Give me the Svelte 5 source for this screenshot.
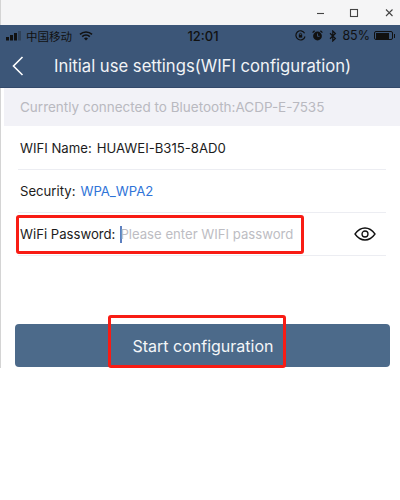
<script lang="ts">
  let password = $state("");
</script>

<div class="window">
  <div class="titlebar">
    <svg class="win" viewBox="0 0 76 14" width="76" height="14" fill="none" stroke="#444" stroke-width="1.1">
      <path d="M0 7.500h7" />
      <rect x="33.500" y="3.500" width="7" height="7" />
      <path d="M69 3.500l6.500 6.500M75.500 3.500l-6.500 6.500" />
    </svg>
  </div>

  <header class="header">
    <div class="status">
      <div class="status_left">
        <svg viewBox="0 0 16 10" width="16" height="10" fill="#111">
          <rect x="0" y="6" width="3" height="3.500" />
          <rect x="4" y="4" width="3" height="5.500" />
          <rect x="8" y="2" width="3" height="7.500" />
          <rect x="12" y="0" width="3" height="9.500" fill="#2f4158" />
        </svg>
        <span class="carrier">中国移动</span>
        <svg viewBox="0 0 14 10" width="14" height="10" fill="none" stroke="#111" stroke-width="1.6">
          <path d="M1 3.400a8.600 8.600 0 0 1 12 0" />
          <path d="M3.200 5.600a5.400 5.400 0 0 1 7.600 0" />
          <path d="M7 9.600l-2-2a2.800 2.800 0 0 1 4 0z" fill="#111" stroke="none" />
        </svg>
      </div>
      <span class="time">12:01</span>
      <div class="status_right">
        <svg viewBox="0 0 11 11" width="11" height="11" fill="none" stroke="#111" stroke-width="1.2">
          <path d="M9.600 3.200A4.600 4.600 0 1 0 10 6.500" />
          <rect x="3.800" y="4.800" width="3.400" height="2.800" fill="#111" stroke="none" />
          <circle cx="5.500" cy="4.400" r="1.100" stroke-width="0.8" />
        </svg>
        <svg viewBox="0 0 11 11" width="11" height="11" fill="#111">
          <circle cx="5.500" cy="6" r="4.400" />
          <path d="M0.600 2.600L2.600 0.700M10.400 2.600L8.400 0.700" stroke="#111" stroke-width="1.300" />
          <path d="M5.500 3.500V6.300H7.600" stroke="#3c5678" stroke-width="0.9" fill="none" />
        </svg>
        <svg viewBox="0 0 8 12" width="8" height="12" fill="none" stroke="#111" stroke-width="1.2">
          <path d="M1 3.200l5.400 5.300L3.800 11V1l2.600 2.500L1 8.800" />
        </svg>
        <span class="pct">85%</span>
        <span class="battery"><span class="level" style="width: 85%"></span></span>
      </div>
    </div>
    <div class="nav">
      <svg class="back" viewBox="0 0 12 20" width="12" height="20" fill="none" stroke="#fff" stroke-width="1.6">
        <path d="M10.500 1L1.500 10l9 9" />
      </svg>
      <h1>Initial use settings(WIFI configuration)</h1>
    </div>
  </header>

  <div class="connected">Currently connected to Bluetooth:ACDP-E-7535</div>

  <div class="form">
    <div class="row">
      <span class="label">WIFI Name:</span>
      <span>HUAWEI-B315-8AD0</span>
    </div>
    <div class="row">
      <span class="label">Security:</span>
      <span class="link">WPA_WPA2</span>
    </div>
    <div class="row">
      <span class="label">WiFi Password:</span>
      <span class="caret"></span>
      <input bind:value={password} placeholder="Please enter WIFI password" />
      <svg class="eye" viewBox="0 0 22 14" width="22" height="14" fill="none" stroke="#111" stroke-width="1.300">
        <path d="M1 7C4 2.800 7.400 1 11 1s7 1.800 10 6c-3 4.200-6.400 6-10 6S4 11.200 1 7z" />
        <circle cx="11" cy="7" r="3" />
      </svg>
      <div class="mark mark_password"></div>
    </div>
  </div>

  <div class="action">
    <button>Start configuration</button>
    <div class="mark mark_button"></div>
  </div>
</div>

<style>
  :global(body) {
    background: #fff;
  }
  .window {
    box-sizing: border-box;
    height: 368px;
    border-left: 1px solid #d4d4d4;
    font-family: Inter, "Liberation Sans", "Noto Sans CJK SC", sans-serif;
    color: #1c1c1c;
    position: relative;
  }
  .titlebar {
    height: 25px;
    background: #f5f5f6;
    display: flex;
    justify-content: flex-end;
    align-items: center;
    padding-right: 7px;
  }
  .win {
    display: block;
  }
  .header {
    height: 63px;
    background: #3c5678;
    box-sizing: border-box;
    margin-left: -1px;
    border-bottom: 1px solid #33496a;
  }
  .status {
    height: 20px;
    padding: 1px 6px 0;
    box-sizing: border-box;
    display: grid;
    grid-template-columns: 1fr auto 1fr;
    align-items: center;
    font-size: 11px;
    color: #111;
  }
  .status_left {
    display: flex;
    align-items: center;
    gap: 4px;
  }
  .carrier {
    margin-right: 3px;
    font-size: 11.500px;
  }
  .time {
    font-size: 13px;
    font-weight: 500;
    margin-left: 6px;
  }
  .status_right {
    display: flex;
    align-items: center;
    justify-content: flex-end;
    gap: 6px;
  }
  .pct {
    font-size: 12.500px;
    margin-left: -1px;
  }
  .battery {
    position: relative;
    box-sizing: border-box;
    display: block;
    width: 19px;
    height: 9px;
    border: 1px solid #111;
    border-radius: 2px;
    padding: 0.5px;
    margin-left: -2px;
    margin-right: 1px;
  }
  .battery::after {
    content: "";
    position: absolute;
    right: -3px;
    top: 1.500px;
    width: 1.500px;
    height: 4px;
    background: #111;
  }
  .level {
    display: block;
    height: 100%;
    background: #111;
  }
  .nav {
    display: flex;
    align-items: center;
    height: 42px;
    padding-left: 12px;
    color: #fff;
  }
  .back {
    flex: none;
  }
  h1 {
    margin: 0 0 0 30px;
    font-size: 16.650px;
    font-weight: 400;
    white-space: nowrap;
    color: #f1f3f6;
  }
  .connected {
    height: 38px;
    line-height: 38px;
    margin-left: 3px;
    padding-left: 16px;
    background: #f2f2f7;
    color: #b9b9c0;
    font-size: 13.500px;
  }
  .form {
    padding: 0 14px 0 17px;
  }
  .row {
    position: relative;
    height: 43px;
    display: flex;
    align-items: center;
    gap: 5px;
    border-bottom: 1px solid #ecedf2;
    box-sizing: border-box;
    font-size: 13.150px;
    padding-left: 2px;
  }
  .row:first-child {
    height: 44px;
  }
  .link {
    color: #2f74d8;
  }
  .caret {
    width: 1.500px;
    height: 17px;
    background: #5c7fc0;
    margin-right: -6.500px;
  }
  input {
    flex: 1;
    min-width: 0;
    border: none;
    outline: none;
    padding: 0;
    background: none;
    font: inherit;
    color: inherit;
  }
  input::placeholder {
    color: #bdbdc3;
    opacity: 1;
  }
  .eye {
    flex: none;
    margin-right: 10px;
  }
  .mark {
    position: absolute;
    box-sizing: border-box;
    border: 3px solid #f81c14;
    border-radius: 3px;
    pointer-events: none;
  }
  .mark_password {
    left: -2px;
    top: 2px;
    width: 288px;
    height: 39px;
  }
  .action {
    position: absolute;
    left: 14px;
    top: 324px;
    width: 375px;
    height: 44px;
  }
  button {
    display: block;
    width: 100%;
    height: 43px;
    border: none;
    border-radius: 4px;
    background: #4c6a8a;
    color: #f4f6f8;
    font: inherit;
    font-size: 16px;
    padding: 0 0 0 1px;
  }
  .mark_button {
    left: 93px;
    top: -9px;
    width: 178px;
    height: 53px;
  }
</style>
